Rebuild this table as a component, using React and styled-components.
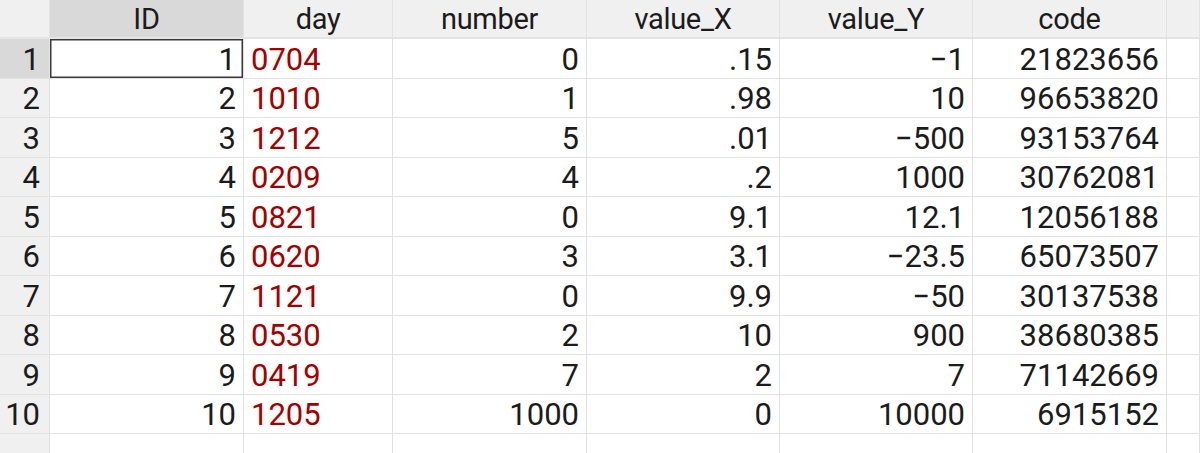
import React from "react";
import styled, { createGlobalStyle } from "styled-components";

const GlobalStyle = createGlobalStyle`
  html, body {
    margin: 0;
    padding: 0;
    background: #ffffff;
  }
  body {
    font-family: Roboto, "Liberation Sans", "Noto Sans CJK JP", sans-serif;
  }
`;

const columns = [
  { key: "id", label: "ID", align: "right" },
  { key: "day", label: "day", align: "left", red: true },
  { key: "number", label: "number", align: "right" },
  { key: "x", label: "value_X", align: "right" },
  { key: "y", label: "value_Y", align: "right" },
  { key: "code", label: "code", align: "right" },
];

const rows = [
  ["1", "0704", "0", ".15", "\u22121", "21823656"],
  ["2", "1010", "1", ".98", "10", "96653820"],
  ["3", "1212", "5", ".01", "\u2212500", "93153764"],
  ["4", "0209", "4", ".2", "1000", "30762081"],
  ["5", "0821", "0", "9.1", "12.1", "12056188"],
  ["6", "0620", "3", "3.1", "\u221223.5", "65073507"],
  ["7", "1121", "0", "9.9", "\u221250", "30137538"],
  ["8", "0530", "2", "10", "900", "38680385"],
  ["9", "0419", "7", "2", "7", "71142669"],
  ["10", "1205", "1000", "0", "10000", "6915152"],
];

export default function App() {
  return (
    <>
      <GlobalStyle />
      <Grid>
        <Corner />
        {columns.map((c, i) => (
          <HeadCell key={c.key} $active={i === 0}>
            {c.label}
          </HeadCell>
        ))}
        <HeadCell />
        {rows.map((r, ri) => (
          <React.Fragment key={ri}>
            <RowHead $active={ri === 0}>{ri + 1}</RowHead>
            {r.map((v, ci) => (
              <Cell
                key={ci}
                $align={columns[ci].align}
                $red={columns[ci].red}
                $selected={ri === 0 && ci === 0}
              >
                {v}
              </Cell>
            ))}
            <Cell />
          </React.Fragment>
        ))}
        <RowHead />
        {columns.map((c) => (
          <Cell key={c.key} />
        ))}
        <Cell />
      </Grid>
    </>
  );
}

const Grid = styled.div`
  display: grid;
  grid-template-columns: 50px 194px 149px 194px 193px 193px 194px 1fr;
  grid-template-rows: 39px repeat(11, 39.5px);
  width: 1200px;
  height: 453px;
  overflow: hidden;
  color: #1b1b1b;
`;

const Corner = styled.div`
  background: #f0f0f0;
  border-right: 1px solid #e2e2e2;
  border-bottom: 2px solid #e4e4e4;
  box-sizing: border-box;
`;

const HeadCell = styled.div`
  box-sizing: border-box;
  background: ${(p) => (p.$active ? "#d9d9d9" : "#f0f0f0")};
  border-right: 1px solid #e2e2e2;
  border-bottom: 2px solid #e4e4e4;
  display: flex;
  align-items: center;
  justify-content: center;
  padding-top: 1px;
  font-size: 29px;
  line-height: 34px;
  letter-spacing: -0.3px;
`;

const RowHead = styled.div`
  box-sizing: border-box;
  background: ${(p) => (p.$active ? "#d9d9d9" : "#f0f0f0")};
  border-right: 1px solid #e2e2e2;
  border-bottom: 1px solid #e2e2e2;
  display: flex;
  align-items: center;
  justify-content: flex-end;
  padding: 3px 9px 0 0;
  font-size: 31px;
  line-height: 34px;
`;

const Cell = styled.div`
  box-sizing: border-box;
  background: #ffffff;
  border-right: 1px solid #e2e2e2;
  border-bottom: 1px solid #e2e2e2;
  display: flex;
  align-items: center;
  justify-content: ${(p) => (p.$align === "left" ? "flex-start" : "flex-end")};
  padding: 3px 7px 0;
  font-size: 31px;
  line-height: 34px;
  color: ${(p) => (p.$red ? "#a50000" : "#1b1b1b")};
  box-shadow: ${(p) => (p.$selected ? "inset 0 0 0 1.5px #3a3a3a" : "none")};
`;
